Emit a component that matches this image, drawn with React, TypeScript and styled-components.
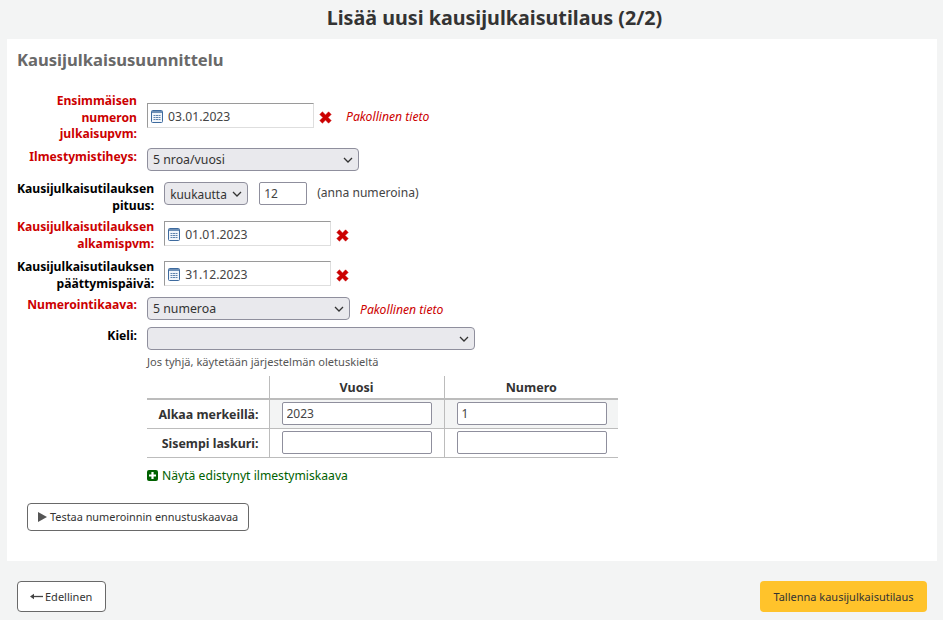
import React from "react";
import styled, { createGlobalStyle } from "styled-components";

const Global = createGlobalStyle`
  html, body { margin: 0; padding: 0; background: #f3f4f4; }
  body { font-family: "Noto Sans", "Open Sans", sans-serif; font-size: 12px; color: #333; }
  * { box-sizing: border-box; }
`;
const Page = styled.div`width: 943px; height: 620px; overflow: hidden; display: flex; flex-direction: column;`;
const Title = styled.h1`margin: 0; height: 39px; padding: 3px 0 0 46px; text-align: center; font-size: 19.7px; line-height: 30px; font-weight: 700; color: #333;`;
const Panel = styled.section`margin: 0 6px 0 7px; height: 522px; background: #fff; padding: 10px 10px 0;`;
const Heading = styled.h2`margin: 0 0 26px; font-size: 16.6px; line-height: 22px; font-weight: 700; color: #696969;`;
const Row = styled.div<{ $h: number; $top?: number }>`
  display: flex; align-items: flex-start;
  height: ${p => p.$h}px; margin-top: ${p => p.$top ?? 0}px;
`;
const Label = styled.label<{ $req?: boolean; $shift?: number }>`
  min-width: 120px; width: min-content; margin-right: 10px; text-align: right; font-weight: 700;
  font-size: 12.17px; line-height: 16.5px; color: ${p => (p.$req ? "#cc0000" : "#000")};
  margin-top: ${p => p.$shift ?? 0}px; flex: none;
`;
const Field = styled.div`display: flex; align-items: center; height: 100%;`;
const DateBox = styled.div`
  width: 167px; height: 25px; display: flex; align-items: center; gap: 5px; padding: 1px 0 0 3px;
  border: 1px solid; border-color: #9a9a9a #dedede #dedede #9a9a9a; background: #fff; font-size: 12.2px; color: #444;
`;
const Clear = styled.svg`width: 13px; height: 13px; margin: 4px 0 0 5px; flex: none;`;
const Required = styled.em<{ $left: number }>`
  margin: 1px 0 0 ${p => p.$left}px; color: #cc0000; font-size: 12.2px; font-style: italic;
`;
const Select = styled.div<{ $w: number; $fs?: number }>`
  width: ${p => p.$w}px; height: 23px; display: flex; align-items: center; justify-content: space-between;
  padding: 0 5px 0 5px; background: #e9e9ed; border: 1px solid #8f8f9d; border-radius: 4px;
  font-size: ${p => p.$fs ?? 12.3}px; color: #333; flex: none;
`;
const Small = styled.input`
  width: 48px; height: 23px; margin-left: 11px; padding: 0 4px; border: 1px solid #8f8f9d; border-radius: 2px;
  font: 12px "Noto Sans", sans-serif; color: #444; background: #fff;
`;
const Note = styled.span`margin: 2px 0 0 10px; font-size: 12.1px; color: #444;`;
const Indented = styled.div`margin-left: 130px;`;
const Hint = styled.div`margin-top: 3px; height: 20px; font-size: 11.1px; line-height: 18px; color: #555;`;
const Table = styled.table`border-collapse: collapse; width: 471px; margin-top: 3px; table-layout: fixed;`;
const Th = styled.th<{ $w?: number }>`
  height: 23px; padding: 0; font-size: 12.5px; font-weight: 700; color: #333; width: ${p => (p.$w ? p.$w + "px" : "auto")};
  border-bottom: 2px solid #bcbcbc; border-left: 1px solid #bcbcbc;
  &:first-child { border-left: 0; }
`;
const RowHead = styled.th`
  padding: 2px 10px 0 0; text-align: right; font-size: 12.4px; font-weight: 700; color: #333;
  border-bottom: 1px solid #bcbcbc; background: #fff;
`;
const Td = styled.td<{ $alt?: boolean }>`
  padding: 0 0 0 12px; border-bottom: 1px solid #bcbcbc; border-left: 1px solid #bcbcbc;
  background: ${p => (p.$alt ? "#f3f4f4" : "#fff")};
`;
const Tr = styled.tr`height: 29px;`;
const CellInput = styled.input`
  display: block; width: 150px; height: 23px; padding: 0 4px; border: 1px solid #8f8f9d; border-radius: 2px;
  font: 12px "Noto Sans", sans-serif; color: #444; background: #fff;
`;
const GreenLink = styled.a`
  display: flex; align-items: center; gap: 4px; margin-top: 9px; height: 18px; color: #006100; font-size: 12.15px;
`;
const OutlineButton = styled.button`
  display: inline-flex; align-items: center; height: 28px; margin: 18px 0 0 10px; padding: 0 10px 0 10px; gap: 3px;
  background: #fff; border: 1px solid #696969; border-radius: 4px; color: #333;
  font: 10.9px "Noto Sans", sans-serif;
`;
const Footer = styled.footer`display: flex; justify-content: space-between; padding: 20px 16px 0 17px;`;
const BackButton = styled.button`
  display: inline-flex; align-items: center; gap: 2px;
  height: 31px; width: 89px; padding: 0 0 0 12px; background: #fff; border: 1px solid #696969; border-radius: 4px; color: #333;
  font: 11px "Noto Sans", sans-serif;
`;
const SaveButton = styled.button`
  height: 31px; width: 167px; background: #ffc32b; border: 0; border-radius: 4px; color: #333;
  font: 11px "Noto Sans", sans-serif;
`;

const Cal = () => (
  <svg width="12" height="13" viewBox="0 0 12 13" style={{ flex: "none" }}>
    <rect x=".5" y=".5" width="11" height="12" rx="1" fill="#f1f5fa" stroke="#3d6a9e" />
    <rect x="1" y="1" width="10" height="2" fill="#6d8fb5" />
    <g fill="#5f83ad">
      <rect x="2.5" y="5" width="2" height="1" /><rect x="5" y="5" width="2" height="1" /><rect x="7.5" y="5" width="2" height="1" />
      <rect x="2.5" y="7" width="2" height="1" /><rect x="5" y="7" width="2" height="1" /><rect x="7.5" y="7" width="2" height="1" />
      <rect x="2.5" y="9" width="2" height="1" /><rect x="5" y="9" width="2" height="1" /><rect x="7.5" y="9" width="2" height="1" />
    </g>
  </svg>
);
const X = () => (
  <Clear viewBox="0 0 13 13">
    <path d="M.8 3.4 3.4 .8 6.5 3.9 9.6 .8 12.2 3.4 9.1 6.5 12.2 9.6 9.6 12.2 6.5 9.1 3.4 12.2 .8 9.6 3.9 6.5Z" fill="#cc0000" stroke="#cc0000" strokeWidth=".5" strokeLinejoin="round" />
  </Clear>
);
const Chevron = () => (
  <svg width="10" height="6" viewBox="0 0 10 6" style={{ flex: "none" }}><path d="M1 1 5 5 9 1" fill="none" stroke="#333" strokeWidth="1.3" /></svg>
);
const Plus = () => (
  <svg width="11" height="11" viewBox="0 0 11 11" style={{ flex: "none" }}><rect width="11" height="11" rx="2" fill="#006100" /><path d="M5.5 2v7M2 5.5h7" stroke="#fff" strokeWidth="2.2" /></svg>
);
const Play = () => (
  <svg width="9" height="10" viewBox="0 0 9 10" style={{ flex: "none" }}><path d="M0 0 9 5 0 10Z" fill="#555" /></svg>
);
const BackArrow = () => (
  <svg width="13" height="7" viewBox="0 0 13 7" style={{ flex: "none" }}><path d="M13 3.5H3" stroke="#444" strokeWidth="1.3" /><path d="M4 .8 0 3.5 4 6.2Z" fill="#444" /></svg>
);

export default function App() {
  return (
    <Page>
      <Global />
      <Title>Lisää uusi kausijulkaisutilaus (2/2)</Title>
      <Panel>
        <Heading>Kausijulkaisusuunnittelu</Heading>
        <Row $h={47} $top={-5}>
          <Label $req $shift={1}>Ensimmäisen numeron julkaisupvm:</Label>
          <Field>
            <DateBox><Cal />03.01.2023</DateBox><X /><Required $left={14}>Pakollinen tieto</Required>
          </Field>
        </Row>
        <Row $h={23} $top={9}>
          <Label $req $shift={1}>Ilmestymistiheys:</Label>
          <Select $w={212}>5 nroa/vuosi<Chevron /></Select>
        </Row>
        <Row $h={33} $top={11}>
          <Label $shift={-1}>Kausijulkaisutilauksen pituus:</Label>
          <Select $w={84} $fs={11.9}>kuukautta<Chevron /></Select>
          <Small defaultValue="12" />
          <Note>(anna numeroina)</Note>
        </Row>
        <Row $h={25} $top={6}>
          <Label $req $shift={-2}>Kausijulkaisutilauksen alkamispvm:</Label>
          <Field><DateBox><Cal />01.01.2023</DateBox><X /></Field>
        </Row>
        <Row $h={25} $top={15}>
          <Label $shift={-2}>Kausijulkaisutilauksen päättymispäivä:</Label>
          <Field><DateBox><Cal />31.12.2023</DateBox><X /></Field>
        </Row>
        <Row $h={23} $top={11}>
          <Label $req>Numerointikaava:</Label>
          <Select $w={203}>5 numeroa<Chevron /></Select>
          <Field><Required $left={10}>Pakollinen tieto</Required></Field>
        </Row>
        <Row $h={23} $top={7}>
          <Label $shift={1}>Kieli:</Label>
          <Select $w={328}><span /><Chevron /></Select>
        </Row>
        <Indented>
          <Hint>Jos tyhjä, käytetään järjestelmän oletuskieltä</Hint>
          <Table>
            <thead>
              <tr>
                <Th $w={122} />
                <Th $w={175}>Vuosi</Th>
                <Th>Numero</Th>
              </tr>
            </thead>
            <tbody>
              <Tr>
                <RowHead>Alkaa merkeillä:</RowHead>
                <Td $alt><CellInput defaultValue="2023" /></Td>
                <Td $alt><CellInput defaultValue="1" /></Td>
              </Tr>
              <Tr>
                <RowHead>Sisempi laskuri:</RowHead>
                <Td><CellInput /></Td>
                <Td><CellInput /></Td>
              </Tr>
            </tbody>
          </Table>
          <GreenLink><Plus />Näytä edistynyt ilmestymiskaava</GreenLink>
        </Indented>
        <OutlineButton><Play />Testaa numeroinnin ennustuskaavaa</OutlineButton>
      </Panel>
      <Footer>
        <BackButton><BackArrow />Edellinen</BackButton>
        <SaveButton>Tallenna kausijulkaisutilaus</SaveButton>
      </Footer>
    </Page>
  );
}
